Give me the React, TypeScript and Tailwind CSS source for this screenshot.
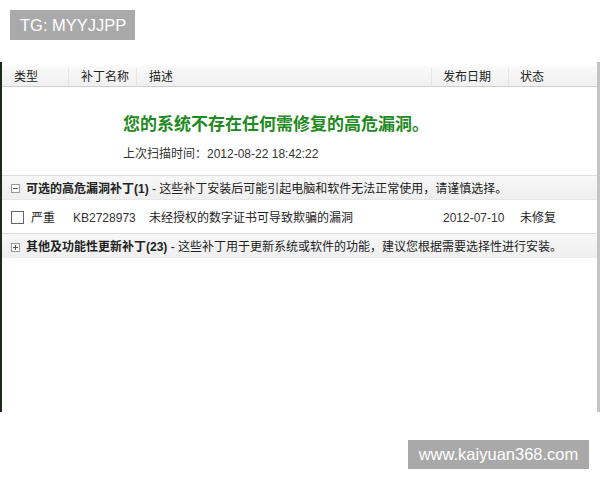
import React from "react";

const font = { fontFamily: '"Liberation Sans", "Noto Sans CJK SC", sans-serif' };

function BoxIcon({ plus }: { plus?: boolean }) {
  return (
    <svg width="9" height="9" viewBox="0 0 9 9" className="shrink-0">
      <rect x="0.5" y="0.5" width="8" height="8" fill="#fff" stroke="#9a9a9a" />
      <line x1="2" y1="4.5" x2="7" y2="4.5" stroke="#555" />
      {plus && <line x1="4.5" y1="2" x2="4.5" y2="7" stroke="#555" />}
    </svg>
  );
}

export default function App() {
  return (
    <div className="w-[600px] h-[480px] bg-white overflow-hidden text-[#222]" style={font}>
      <div className="pt-[10px] pl-[10px]">
        <div className="w-[125px] h-[30px] bg-[#a9a9a9] text-white text-[16.5px] flex items-center pl-[10px]">
          TG: MYYJJPP
        </div>
      </div>

      <div className="mt-[22px] h-[350px] border-l-2 border-l-[#1c2a1c] border-r-[3px] border-r-[#c4c4c4] flex flex-col pt-[4px]">
        {/* header */}
        <div className="h-[21px] flex text-[12px] leading-[14px] pt-[2px] bg-gradient-to-b from-[#fafafa] to-[#f0f0f0] border-b border-[#cfcfcf]">
          <div className="w-[67px] pl-[12px] flex items-center border-r border-[#e4e4e4]">类型</div>
          <div className="w-[68px] pl-[12px] flex items-center border-r border-[#e4e4e4]">补丁名称</div>
          <div className="w-[295px] pl-[12px] flex items-center border-r border-[#e4e4e4]">描述</div>
          <div className="w-[77px] pl-[11px] flex items-center border-r border-[#e4e4e4]">发布日期</div>
          <div className="flex-1 pl-[11px] flex items-center">状态</div>
        </div>

        {/* message */}
        <div className="h-[89px] pl-[121px] pt-[27px] border-b border-[#dcdcdc]">
          <div className="text-[17px] font-bold text-[#1f8a22] leading-[22px]">
            您的系统不存在任何需修复的高危漏洞。
          </div>
          <div className="mt-[10px] text-[12px] text-[#333] leading-[16px]">
            上次扫描时间：2012-08-22 18:42:22
          </div>
        </div>

        {/* group 1 */}
        <div className="h-[24px] flex items-center pl-[9px] pt-[2px] gap-[6px] text-[12px] bg-gradient-to-b from-[#f7f7f7] to-[#efefef] border-b border-[#e6e6e6]">
          <BoxIcon />
          <div>
            <span className="font-bold">可选的高危漏洞补丁(1)</span>
            <span> - 这些补丁安装后可能引起电脑和软件无法正常使用，请谨慎选择。</span>
          </div>
        </div>

        {/* row */}
        <div className="h-[34px] flex items-center pl-[9px] pt-[2px] text-[12px] border-b border-[#dcdcdc]">
          <div className="w-[13px] h-[13px] border border-[#666] bg-white shrink-0" />
          <div className="w-[42px] ml-[7px]">严重</div>
          <div className="w-[76px] text-[#333]">KB2728973</div>
          <div className="w-[294px]">未经授权的数字证书可导致欺骗的漏洞</div>
          <div className="w-[77px] text-[#333]">2012-07-10</div>
          <div>未修复</div>
        </div>

        {/* group 2 */}
        <div className="h-[24px] flex items-center pl-[9px] pt-[2px] gap-[6px] text-[12px] bg-gradient-to-b from-[#f7f7f7] to-[#efefef]">
          <BoxIcon plus />
          <div>
            <span className="font-bold">其他及功能性更新补丁(23)</span>
            <span> - 这些补丁用于更新系统或软件的功能，建议您根据需要选择性进行安装。</span>
          </div>
        </div>
        <div className="flex-1" />
      </div>

      <div className="mt-[28px] pl-[408px]">
        <div className="w-[181px] h-[29px] bg-[#a9a9a9] text-white text-[16.5px] flex items-center justify-center">
          www.kaiyuan368.com
        </div>
      </div>
    </div>
  );
}
